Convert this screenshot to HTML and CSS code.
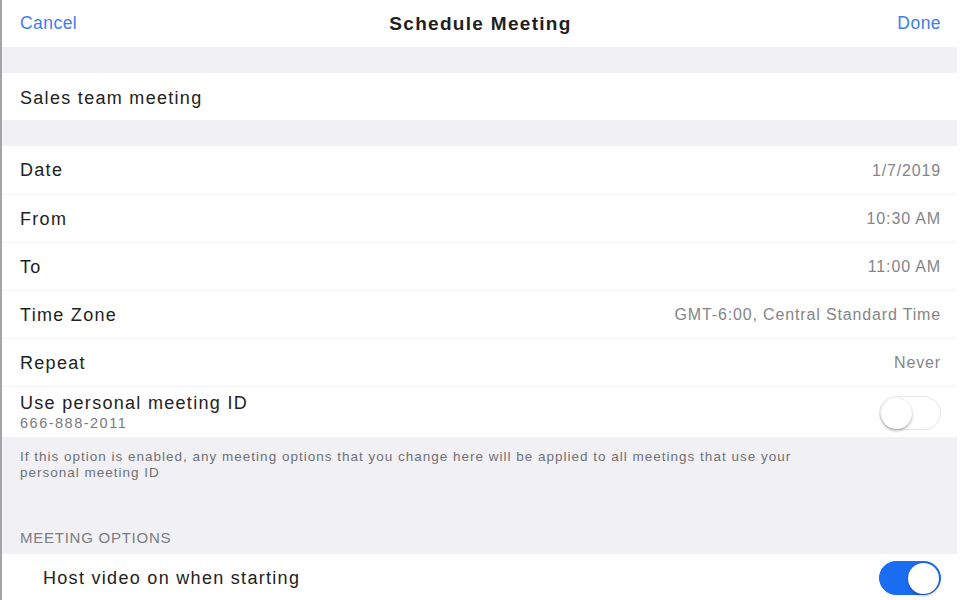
FILE: index.html
```html
<!DOCTYPE html>
<html>
<head>
<meta charset="utf-8">
<link rel="stylesheet" href="styles.css">
</head>
<body>
<div class="screen">
  <header class="navbar">
    <span class="nav-btn left">Cancel</span>
    <span class="nav-title">Schedule Meeting</span>
    <span class="nav-btn right">Done</span>
  </header>
  <div class="gap"></div>
  <div class="row single"><span class="label">Sales team meeting</span></div>
  <div class="gap"></div>
  <div class="group">
    <div class="row"><span class="label">Date</span><span class="value">1/7/2019</span></div>
    <div class="row"><span class="label">From</span><span class="value">10:30 AM</span></div>
    <div class="row"><span class="label">To</span><span class="value">11:00 AM</span></div>
    <div class="row"><span class="label">Time Zone</span><span class="value">GMT-6:00, Central Standard Time</span></div>
    <div class="row"><span class="label">Repeat</span><span class="value">Never</span></div>
    <div class="row tall">
      <div class="stack">
        <span class="label">Use personal meeting ID</span>
        <span class="sub">666-888-2011</span>
      </div>
      <span class="toggle"><span class="knob"></span></span>
    </div>
  </div>
  <div class="footnote">
    <p class="note">If this option is enabled, any meeting options that you change here will be applied to all meetings that use your personal meeting ID</p>
    <p class="section-title">MEETING OPTIONS</p>
  </div>
  <div class="row indent">
    <span class="label">Host video on when starting</span>
    <span class="toggle on"><span class="knob"></span></span>
  </div>
</div>
</body>
</html>
```
FILE: styles.css
```css
* { box-sizing: border-box; margin: 0; padding: 0; }
html, body { width: 960px; height: 600px; overflow: hidden; background: #fff; }
body { font-family: "Liberation Sans", Arial, sans-serif; color: #222; }
.screen {
  width: 960px; height: 600px;
  border-left: 2px solid #a4a4a8;
  padding-right: 3px;
  background: #fff;
}
.navbar {
  height: 47px;
  display: grid; grid-template-columns: 1fr auto 1fr; align-items: center;
  padding: 0 16px 0 18px;
  background: #fff;
}
.nav-btn { color: #3f7cf0; font-size: 17.5px; letter-spacing: 0.45px; }
.nav-btn.right { justify-self: end; }
.nav-title { font-size: 19px; font-weight: bold; letter-spacing: 1.3px; color: #1e1e1e; }
.gap { height: 26px; background: #f0f0f5; }
.row {
  height: 48px;
  display: flex; align-items: center; justify-content: space-between;
  padding: 0 16px 0 18px;
  background: #fff;
}
.row.single { height: 47px; padding-top: 3px; }
.group .row { padding-top: 1px; }
.group .row + .row { border-top: 1px solid #f3f3f5; }
.label { font-size: 18px; letter-spacing: 1.3px; color: #222; }
.value { font-size: 16px; letter-spacing: 0.85px; color: #858589; }
.group .row.tall { height: 51px; align-items: flex-start; padding-top: 6px; }
.stack { display: flex; flex-direction: column; }
.sub { font-size: 14.5px; color: #7a7a7e; letter-spacing: 1.5px; margin-top: 1px; }
.row.tall .toggle { margin-top: 3px; }
.toggle {
  width: 62px; height: 34px; border-radius: 17px;
  border: 1.5px solid #e6e6ea;
  background: #fff;
  display: flex; align-items: center;
  padding: 0 1px;
}
.knob {
  width: 31px; height: 31px; border-radius: 50%;
  background: #fff;
  box-shadow: 0 2px 3px rgba(0,0,0,0.25), 0 0 1px rgba(0,0,0,0.2);
}
.toggle.on { background: #1a6cf0; border-color: #1a6cf0; justify-content: flex-end; }
.footnote { height: 117px; background: #f0f0f5; padding: 12px 18px 0 18px; }
.note { font-size: 13.5px; line-height: 16px; color: #707075; width: 800px; letter-spacing: 1px; }
.section-title { font-size: 15px; color: #7c7c80; letter-spacing: 0.75px; margin-top: 48px; }
.row.indent { padding-left: 41px; }
```
